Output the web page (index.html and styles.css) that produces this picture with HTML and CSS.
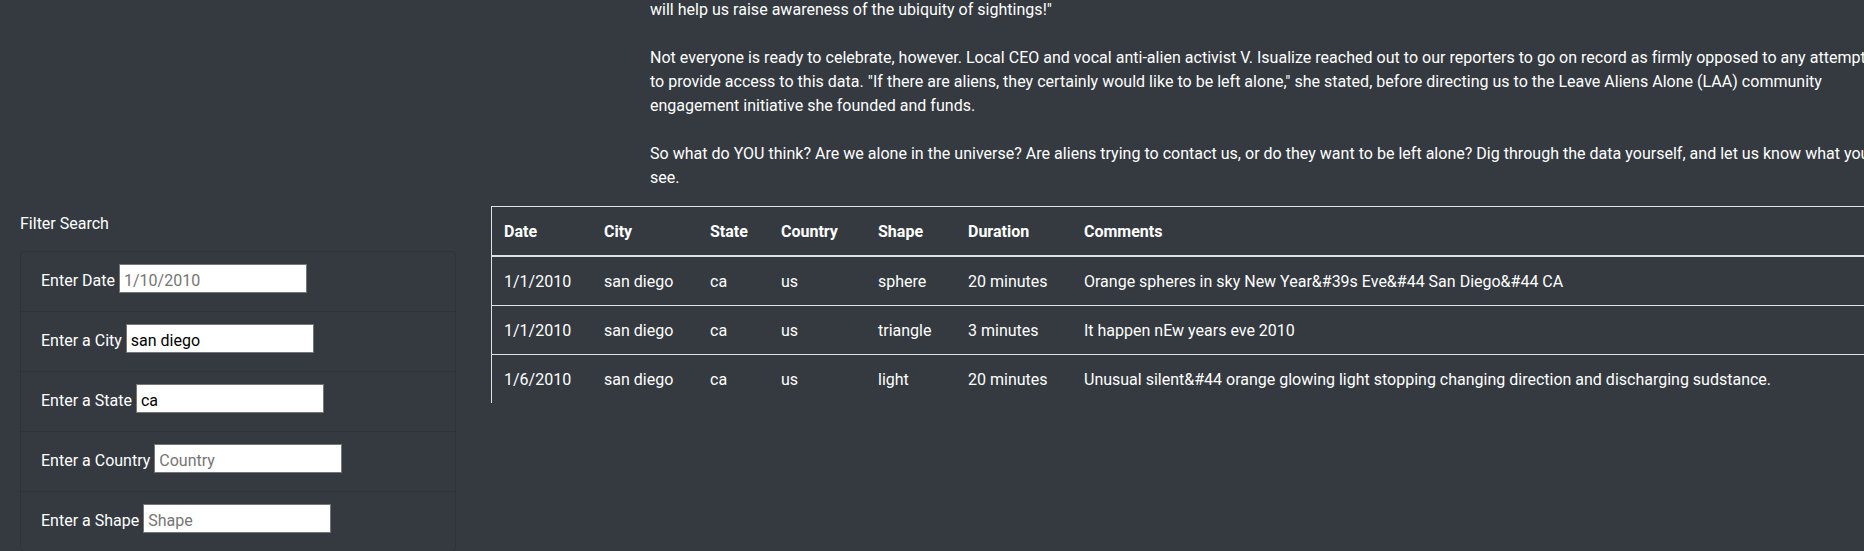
FILE: index.html
```html
<!DOCTYPE html>
<html lang="en">
<head>
<meta charset="utf-8">
<title>UFO Sightings</title>
<link rel="stylesheet" href="styles.css">
</head>
<body>
<div class="page">
  <article class="story">
    <p class="story-text">will help us raise awareness of the ubiquity of sightings!"<br><br>Not everyone is ready to celebrate, however. Local CEO and vocal anti-alien activist V. Isualize reached out to our reporters to go on record as firmly opposed to any attempt to provide access to this data. "If there are aliens, they certainly would like to be left alone," she stated, before directing us to the Leave Aliens Alone (LAA) community engagement initiative she founded and funds.<br><br>So what do YOU think? Are we alone in the universe? Are aliens trying to contact us, or do they want to be left alone? Dig through the data yourself, and let us know what you see.</p>
  </article>

  <div class="main">
    <aside class="sidebar">
      <div class="sidebar-title">Filter Search</div>
      <ul class="filters">
        <li class="filter-item">
          <label for="datetime">Enter Date</label>
          <input class="filter-input" id="datetime" type="text" placeholder="1/10/2010">
        </li>
        <li class="filter-item">
          <label for="city">Enter a City</label>
          <input class="filter-input" id="city" type="text" value="san diego">
        </li>
        <li class="filter-item">
          <label for="state">Enter a State</label>
          <input class="filter-input" id="state" type="text" value="ca">
        </li>
        <li class="filter-item">
          <label for="country">Enter a Country</label>
          <input class="filter-input" id="country" type="text" placeholder="Country">
        </li>
        <li class="filter-item">
          <label for="shape">Enter a Shape</label>
          <input class="filter-input" id="shape" type="text" placeholder="Shape">
        </li>
      </ul>
    </aside>

    <section class="results">
      <table class="ufo-table">
        <thead>
          <tr>
            <th class="col-date">Date</th>
            <th class="col-city">City</th>
            <th class="col-state">State</th>
            <th class="col-country">Country</th>
            <th class="col-shape">Shape</th>
            <th class="col-duration">Duration</th>
            <th class="col-comments">Comments</th>
          </tr>
        </thead>
        <tbody>
          <tr>
            <td>1/1/2010</td><td>san diego</td><td>ca</td><td>us</td><td>sphere</td><td>20 minutes</td>
            <td>Orange spheres in sky New Year&amp;#39s Eve&amp;#44 San Diego&amp;#44 CA</td>
          </tr>
          <tr>
            <td>1/1/2010</td><td>san diego</td><td>ca</td><td>us</td><td>triangle</td><td>3 minutes</td>
            <td>It happen nEw years eve 2010</td>
          </tr>
          <tr>
            <td>1/6/2010</td><td>san diego</td><td>ca</td><td>us</td><td>light</td><td>20 minutes</td>
            <td>Unusual silent&amp;#44 orange glowing light stopping changing direction and discharging sudstance.</td>
          </tr>
        </tbody>
      </table>
    </section>
  </div>
</div>
</body>
</html>
```
FILE: styles.css
```css
html, body {
  margin: 0;
  padding: 0;
  background: #343a40;
}

body {
  color: #fff;
  font-family: Roboto, "Segoe UI", "Liberation Sans", sans-serif;
  font-size: 16px;
  line-height: 24px;
}

.page {
  width: 1864px;
  height: 551px;
  overflow: hidden;
}

.story {
  margin: -2px 0 0 650px;
  width: 1227px;
}

.story-text {
  margin: 0 0 16px 0;
  letter-spacing: 0.02px;
}

.main {
  display: flex;
  align-items: flex-start;
}

.sidebar {
  flex: none;
  width: 436px;
  margin-left: 20px;
  padding-top: 6px;
}

.sidebar-title {
  margin-bottom: 15px;
}

.filters {
  list-style: none;
  margin: 0;
  padding: 0;
  border: 1px solid #2e3338;
  border-radius: 4px;
}

.filter-item {
  display: flex;
  align-items: baseline;
  gap: 4px;
  height: 35px;
  padding: 12px 20px;
}

.filter-item + .filter-item {
  border-top: 1px solid #2e3338;
}

.filter-item label {
  line-height: 24px;
  white-space: nowrap;
}

.filter-input {
  box-sizing: border-box;
  width: 188px;
  height: 29px;
  margin: 0;
  padding: 4px 4px 0;
  border: 1px solid #767676;
  border-radius: 0;
  background: #fff;
  color: #000;
  font-family: Roboto, "Segoe UI", "Liberation Sans", sans-serif;
  font-size: 16px;
  outline: none;
}

.filter-input::placeholder {
  color: #757575;
}

.results {
  flex: none;
  margin-left: 35px;
}

.ufo-table {
  width: 1400px;
  table-layout: fixed;
  border-collapse: separate;
  border-spacing: 0;
  border-left: 1px solid #dee2e6;
}

.ufo-table th,
.ufo-table td {
  box-sizing: border-box;
  padding: 13px 12px 11px;
  text-align: left;
  vertical-align: top;
  white-space: nowrap;
}

.ufo-table th {
  font-weight: 700;
  border-top: 1px solid #dee2e6;
  border-bottom: 2px solid #dee2e6;
}

.ufo-table tbody tr + tr td {
  border-top: 1px solid #dee2e6;
}

.col-date { width: 100px; }
.col-city { width: 106px; }
.col-state { width: 71px; }
.col-country { width: 97px; }
.col-shape { width: 90px; }
.col-duration { width: 116px; }
```
